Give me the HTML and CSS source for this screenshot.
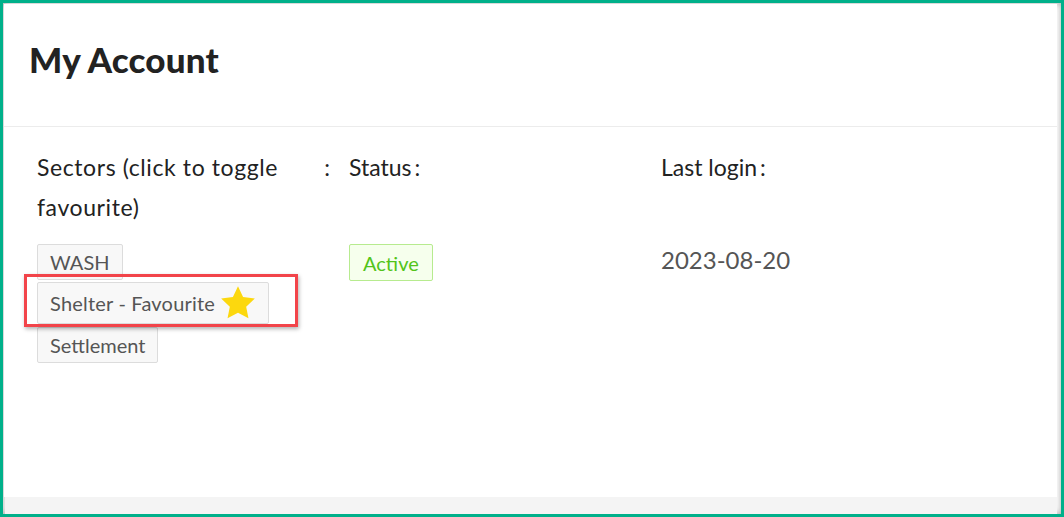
FILE: index.html
```html
<!DOCTYPE html>
<html lang="en">

<head>
    <meta charset="UTF-8">
    <title>My Account</title>
    <link rel="stylesheet" href="styles.css">
</head>

<body>
    <div class="frame">
        <div class="card">
            <header class="card-head">
                <h1>My Account</h1>
            </header>
            <div class="card-body">
                <div class="col">
                    <div class="field-label">
                        <span class="label-text">Sectors (click to toggle favourite)</span>
                        <span class="colon">:</span>
                    </div>
                    <div class="tags">
                        <span class="tag">WASH</span>
                        <span class="tag fav-wrap">Shelter - Favourite
                            <svg class="star" viewBox="1.6 1.4 20.8 20.8" width="34" height="34">
                                <path d="M12 1.6l3.1 6.6 7.2.9-5.3 5 1.4 7.1L12 17.7l-6.4 3.5 1.4-7.1-5.3-5 7.2-.9z" fill="#fcd80e"/>
                            </svg>
                            <span class="highlight"></span>
                        </span>
                        <span class="tag">Settlement</span>
                    </div>
                </div>
                <div class="col">
                    <div class="field-label"><span>Status</span><span class="colon tight">:</span></div>
                    <div class="tags">
                        <span class="tag tag-success">Active</span>
                    </div>
                </div>
                <div class="col">
                    <div class="field-label"><span>Last login</span><span class="colon tight">:</span></div>
                    <div class="value">2023-08-20</div>
                </div>
            </div>
        </div>
        <div class="card-foot"></div>
    </div>
</body>

</html>
```

FILE: styles.css
```css
* {
    margin: 0;
    padding: 0;
    box-sizing: border-box;
}

body {
    font-family: 'Lato', 'Noto Sans', sans-serif;
    color: #222;
    background: #fff;
}

.frame {
    width: 1064px;
    height: 517px;
    border: 3px solid #00b08a;
    display: flex;
    flex-direction: column;
    box-shadow: inset 0 0 7px rgba(0, 0, 0, 0.35);
}

.card {
    flex: 1;
    margin: 1px 4px 0 1px;
    background: #fff;
}

.card-head {
    height: 123px;
    padding: 38px 0 0 25px;
    border-bottom: 1px solid #ececec;
}

h1 {
    font-size: 35px;
    line-height: 35px;
    font-weight: 900;
    color: #222;
    letter-spacing: 0.2px;
}

.card-body {
    display: flex;
    padding: 20px 0 0 21px;
}

.col {
    width: 312px;
    padding: 0 12px;
}

.field-label {
    display: flex;
    justify-content: space-between;
    height: 80px;
    font-size: 23px;
    line-height: 40px;
    color: #222;
}

.label-text {
    max-width: 270px;
    letter-spacing: 0.6px;
}

.colon {
    padding-left: 4px;
    margin-right: -5px;
}

.colon.tight {
    padding-left: 3px;
    margin-right: auto;
}

.tags {
    margin-top: 17px;
    display: flex;
    flex-direction: column;
    align-items: flex-start;
}

.tag {
    display: inline-flex;
    align-items: center;
    height: 36px;
    padding: 0 12px;
    font-size: 20px;
    color: #555;
    background: #f8f8f8;
    border: 1px solid #dcdcdc;
    border-radius: 2px;
    margin-bottom: 2px;
}

.fav-wrap {
    position: relative;
    height: 42px;
    padding-right: 13px;
    margin-bottom: 3px;
    letter-spacing: 0.2px;
}

.star {
    margin-left: 6px;
}

.highlight {
    position: absolute;
    left: -14px;
    top: -9px;
    right: -30px;
    bottom: -4px;
    border: 3px solid #f2444a;
    box-shadow: 1px 2px 4px rgba(0, 0, 0, 0.3);
}

.tag-success {
    height: 37px;
    padding: 0 13px;
    color: #52c41a;
    background: #f6ffed;
    border-color: #b7eb8f;
}

.value {
    margin-top: 17px;
    line-height: 32px;
    font-size: 24px;
    color: #555;
}

.card-foot {
    height: 17px;
    margin: 0 4px 0 2px;
    background: #f4f4f4;
}
```
